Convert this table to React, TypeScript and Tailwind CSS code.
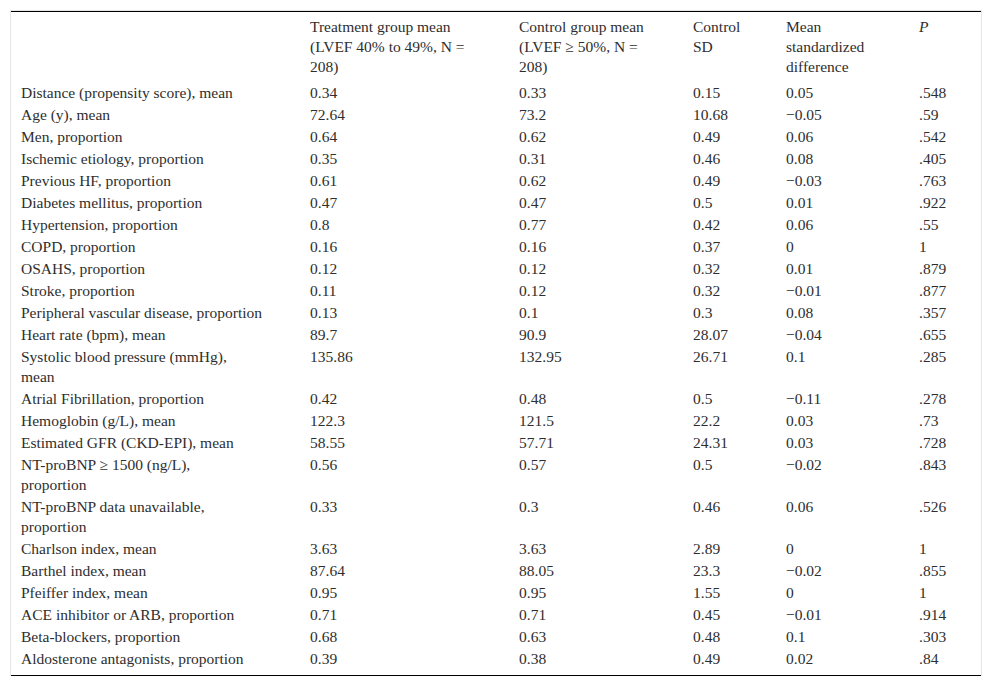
import { Fragment } from 'react';

type Row = {
  label: string[];
  values: string[];
};

const rows: Row[] = [
  { label: ['Distance (propensity score), mean'], values: ['0.34', '0.33', '0.15', '0.05', '.548'] },
  { label: ['Age (y), mean'], values: ['72.64', '73.2', '10.68', '\u22120.05', '.59'] },
  { label: ['Men, proportion'], values: ['0.64', '0.62', '0.49', '0.06', '.542'] },
  { label: ['Ischemic etiology, proportion'], values: ['0.35', '0.31', '0.46', '0.08', '.405'] },
  { label: ['Previous HF, proportion'], values: ['0.61', '0.62', '0.49', '\u22120.03', '.763'] },
  { label: ['Diabetes mellitus, proportion'], values: ['0.47', '0.47', '0.5', '0.01', '.922'] },
  { label: ['Hypertension, proportion'], values: ['0.8', '0.77', '0.42', '0.06', '.55'] },
  { label: ['COPD, proportion'], values: ['0.16', '0.16', '0.37', '0', '1'] },
  { label: ['OSAHS, proportion'], values: ['0.12', '0.12', '0.32', '0.01', '.879'] },
  { label: ['Stroke, proportion'], values: ['0.11', '0.12', '0.32', '\u22120.01', '.877'] },
  { label: ['Peripheral vascular disease, proportion'], values: ['0.13', '0.1', '0.3', '0.08', '.357'] },
  { label: ['Heart rate (bpm), mean'], values: ['89.7', '90.9', '28.07', '\u22120.04', '.655'] },
  { label: ['Systolic blood pressure (mmHg),', 'mean'], values: ['135.86', '132.95', '26.71', '0.1', '.285'] },
  { label: ['Atrial Fibrillation, proportion'], values: ['0.42', '0.48', '0.5', '\u22120.11', '.278'] },
  { label: ['Hemoglobin (g/L), mean'], values: ['122.3', '121.5', '22.2', '0.03', '.73'] },
  { label: ['Estimated GFR (CKD-EPI), mean'], values: ['58.55', '57.71', '24.31', '0.03', '.728'] },
  { label: ['NT-proBNP \u2265 1500 (ng/L),', 'proportion'], values: ['0.56', '0.57', '0.5', '\u22120.02', '.843'] },
  { label: ['NT-proBNP data unavailable,', 'proportion'], values: ['0.33', '0.3', '0.46', '0.06', '.526'] },
  { label: ['Charlson index, mean'], values: ['3.63', '3.63', '2.89', '0', '1'] },
  { label: ['Barthel index, mean'], values: ['87.64', '88.05', '23.3', '\u22120.02', '.855'] },
  { label: ['Pfeiffer index, mean'], values: ['0.95', '0.95', '1.55', '0', '1'] },
  { label: ['ACE inhibitor or ARB, proportion'], values: ['0.71', '0.71', '0.45', '\u22120.01', '.914'] },
  { label: ['Beta-blockers, proportion'], values: ['0.68', '0.63', '0.48', '0.1', '.303'] },
  { label: ['Aldosterone antagonists, proportion'], values: ['0.39', '0.38', '0.49', '0.02', '.84'] },
];

const headers: string[][] = [
  ['Treatment group mean', '(LVEF 40% to 49%, N =', '208)'],
  ['Control group mean', '(LVEF \u2265 50%, N =', '208)'],
  ['Control', 'SD'],
  ['Mean', 'standardized', 'difference'],
];

function Lines({ lines }: { lines: string[] }) {
  return (
    <>
      {lines.map((line, i) => (
        <Fragment key={i}>
          {i > 0 && <br />}
          {line}
        </Fragment>
      ))}
    </>
  );
}

export default function App() {
  return (
    <div className="min-h-[687px] bg-white pt-[10px] pl-[10px]">
      <div
        className="w-[972px] border-x border-t border-[#e6e6e6] text-[15.5px] leading-[20px] text-[#2e2e2e]"
        style={{ fontFamily: '"Liberation Serif", "Times New Roman", serif' }}
      >
        <table className="w-full table-fixed border-collapse border-y border-black">
          <colgroup>
            <col className="w-[289px]" />
            <col className="w-[209px]" />
            <col className="w-[174px]" />
            <col className="w-[93px]" />
            <col className="w-[133px]" />
            <col className="w-[72px]" />
          </colgroup>
          <thead>
            <tr className="align-top">
              <th className="px-[10px] pt-[5px] pb-[5px] text-left font-normal" />
              {headers.map((h, i) => (
                <th key={i} className="px-[10px] pt-[5px] pb-[5px] text-left font-normal whitespace-nowrap">
                  <Lines lines={h} />
                </th>
              ))}
              <th className="px-[10px] pt-[5px] pb-[5px] text-left font-normal italic">P</th>
            </tr>
          </thead>
          <tbody>
            {rows.map((row, r) => {
              const last = r === rows.length - 1;
              const pad = last ? 'pt-px pb-[6px]' : 'py-px';
              return (
                <tr key={r} className="align-top">
                  <td className={`px-[10px] whitespace-nowrap ${pad}`}>
                    <Lines lines={row.label} />
                  </td>
                  {row.values.map((v, c) => (
                    <td key={c} className={`px-[10px] whitespace-nowrap ${pad}`}>
                      {v}
                    </td>
                  ))}
                </tr>
              );
            })}
          </tbody>
        </table>
      </div>
    </div>
  );
}
